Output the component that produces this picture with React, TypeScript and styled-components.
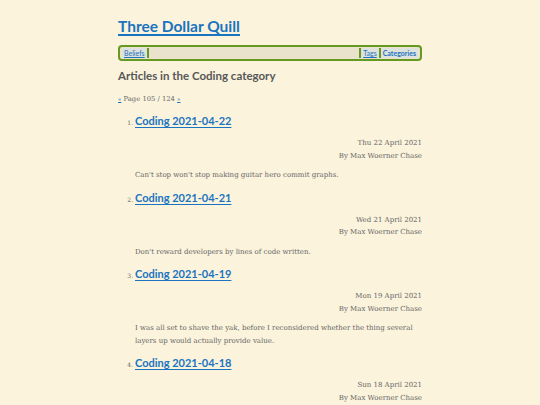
import React from 'react'
import styled, { createGlobalStyle } from 'styled-components'

const GlobalStyle = createGlobalStyle`
  html, body {
    margin: 0;
    padding: 0;
    background: #fbf3dc;
  }
  body {
    font-family: 'DejaVu Serif', serif;
    color: #555;
  }
`

const Page = styled.div`
  width: 304px;
  margin: 0 auto;
  padding-top: 14px;
`

const SiteTitle = styled.h1`
  font-family: 'Lato', 'Noto Sans', sans-serif;
  font-size: 15.5px;
  font-weight: 700;
  margin: 0 0 7px;
  line-height: 24px;

  a {
    color: #1a74c0;
    text-decoration: underline;
    text-decoration-thickness: 1.5px;
    text-underline-offset: 2px;
  }
`

const Nav = styled.nav`
  display: flex;
  align-items: center;
  height: 10px;
  padding: 1px 2px;
  background: #e9e2cd;
  border: 2px solid #66991f;
  border-radius: 4px;
  font-family: 'Lato', 'Noto Sans', sans-serif;
  font-size: 7px;
`

const NavLink = styled.a<{ $current?: boolean; $divider?: 'left' | 'right' }>`
  color: #1a74c0;
  background: #dfe2dc;
  font-weight: ${(p) => (p.$current ? 700 : 400)};
  text-decoration: ${(p) => (p.$current ? 'none' : 'underline')};
  padding: 0 2px;
  line-height: 10px;
  ${(p) => p.$divider === 'right' && 'border-right: 2px solid #66991f;'}
  ${(p) => p.$divider === 'left' && 'border-left: 2px solid #66991f;'}
`

const Spacer = styled.div`
  flex: 1;
`

const CategoryHeading = styled.h2`
  font-family: 'Lato', 'Noto Sans', sans-serif;
  font-size: 11.5px;
  font-weight: 700;
  color: #585858;
  margin: 7px 0 0;
  line-height: 16px;
`

const Pager = styled.p`
  font-size: 6.8px;
  margin: 10px 0 0;
  line-height: 10px;
  color: #666;

  a {
    color: #1a74c0;
    font-size: 5.5px;
  }
`

const ArticleList = styled.ol`
  margin: 8px 0 0;
  padding-left: 17px;
`

const Item = styled.li`
  font-size: 6px;
  color: #666;
  margin-bottom: 7px;
`

const ArticleTitle = styled.a`
  font-family: 'Lato', 'Noto Sans', sans-serif;
  font-size: 11px;
  font-weight: 700;
  color: #1a74c0;
  line-height: 18px;
  text-underline-offset: 1.5px;
`

const Meta = styled.div`
  text-align: right;
  font-size: 7px;
  line-height: 12.5px;
  color: #666;
  margin-top: 7px;
`

const Summary = styled.p`
  font-size: 7px;
  line-height: 12.5px;
  color: #666;
  margin: 7px 0 0;
`

const articles: { title: string; date: string; summary?: string }[] = [
  {
    title: 'Coding 2021-04-22',
    date: 'Thu 22 April 2021',
    summary: "Can't stop won't stop making guitar hero commit graphs.",
  },
  {
    title: 'Coding 2021-04-21',
    date: 'Wed 21 April 2021',
    summary: "Don't reward developers by lines of code written.",
  },
  {
    title: 'Coding 2021-04-19',
    date: 'Mon 19 April 2021',
    summary:
      'I was all set to shave the yak, before I reconsidered whether the thing several layers up would actually provide value.',
  },
  {
    title: 'Coding 2021-04-18',
    date: 'Sun 18 April 2021',
  },
]

const App: React.FC = () => {
  return (
    <>
      <GlobalStyle />
      <Page>
        <SiteTitle>
          <a href="#">Three Dollar Quill</a>
        </SiteTitle>
        <Nav>
          <NavLink href="#" $divider="right">Beliefs</NavLink>
          <Spacer />
          <NavLink href="#" $divider="left">Tags</NavLink>
          <NavLink href="#" $current $divider="left">Categories</NavLink>
        </Nav>
        <CategoryHeading>Articles in the Coding category</CategoryHeading>
        <Pager>
          <a href="#">«</a> Page 105 / 124 <a href="#">»</a>
        </Pager>
        <ArticleList>
          {articles.map((a) => (
            <Item key={a.title}>
              <ArticleTitle href="#">{a.title}</ArticleTitle>
              <Meta>
                {a.date}
                <br />
                By Max Woerner Chase
              </Meta>
              {a.summary && <Summary>{a.summary}</Summary>}
            </Item>
          ))}
        </ArticleList>
      </Page>
    </>
  )
}

export default App
